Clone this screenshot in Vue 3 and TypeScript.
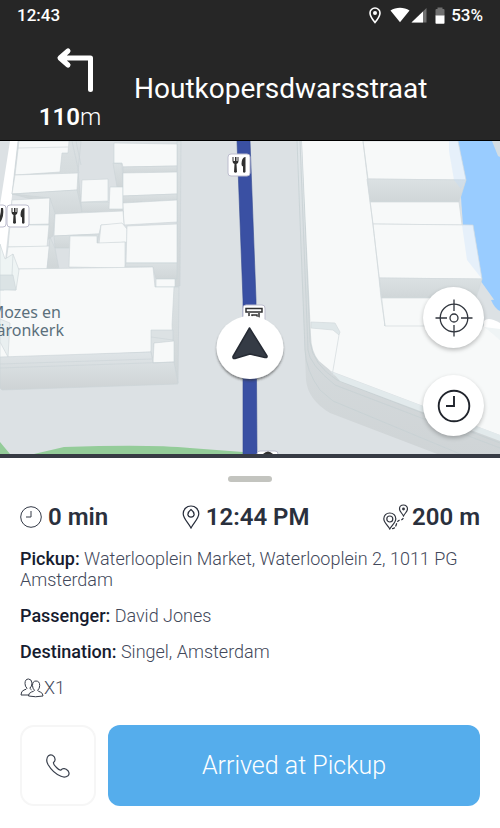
<script setup lang="ts">
import { ref } from 'vue'

interface Detail {
  label: string
  value: string
}

const nextTurn = { distance: 110, unit: 'm', street: 'Houtkopersdwarsstraat' }

const details: Detail[] = [
  { label: 'Pickup:', value: 'Waterlooplein Market, Waterlooplein 2, 1011 PG Amsterdam' },
  { label: 'Passenger:', value: 'David Jones' },
  { label: 'Destination:', value: 'Singel, Amsterdam' },
]

const passengers = ref(1)
</script>

<template>
  <main class="screen">
    <header class="top">
      <div class="status">
        <time>12:43</time>
        <div class="status-icons">
          <svg class="pin" width="12" height="17" viewBox="0 0 12 17">
            <path d="M6 1C3.2 1 1 3.2 1 6c0 3.500 5 9.500 5 9.500S11 9.500 11 6c0-2.800-2.200-5-5-5z" fill="none" stroke="#fff" stroke-width="1.600" />
            <circle cx="6" cy="6" r="2" fill="#fff" />
          </svg>
          <svg width="38" height="17" viewBox="0 0 38 17">
            <path d="M0.500 3.500C6 -0.200 14 -0.200 19.500 3.500L10 15.300z" fill="#fff" />
            <path d="M36.500 1v14.500H21.500z" fill="#707070" />
            <path d="M33 4.400v11.100H21.500z" fill="#fff" />
          </svg>
          <svg class="battery" width="10" height="17" viewBox="0 0 10 17">
            <path d="M0.500 3q0-1 1-1h1V.500h5V2h1q1 0 1 1v6h-9z" fill="#707070" />
            <path d="M.500 8.500h9V16q0 .800-.800.800H1.300Q.500 16.800.500 16z" fill="#fff" />
          </svg>
          <span>53%</span>
        </div>
      </div>
      <div class="turn">
        <div class="maneuver">
          <svg width="38" height="46" viewBox="0 0 38 46" fill="none" stroke="#fff" stroke-width="5" stroke-linecap="round" stroke-linejoin="round">
            <path d="M12 5L4 12L12 19M5 12H34.500V43.500" />
          </svg>
          <p class="distance"><strong>{{ nextTurn.distance }}</strong>{{ nextTurn.unit }}</p>
        </div>
        <h1>{{ nextTurn.street }}</h1>
      </div>
    </header>

    <section class="map" aria-label="Map">
      <svg class="map-canvas" viewBox="0 141 500 313">
        <defs>
          <linearGradient id="side" x1="0" y1="0" x2="0" y2="1">
            <stop offset="0" stop-color="#dbe1e3" />
            <stop offset="1" stop-color="#d0d6d8" />
          </linearGradient>
          <linearGradient id="wall" x1="0" y1="0" x2="0" y2="1">
            <stop offset="0" stop-color="#dfe5e8" />
            <stop offset="1" stop-color="#ced3d5" />
          </linearGradient>
          <filter id="soft" x="-20%" y="-20%" width="140%" height="150%">
            <feDropShadow dx="0" dy="2" stdDeviation="1" flood-color="#333" flood-opacity=".55" />
          </filter>
        </defs>
        <rect y="141" width="500" height="313" fill="#dce1e4" />

        <!-- alley and the western city block -->
        <path d="M10 141H18L11 205L4 270L0 255V205z" fill="#fff" />
        <g stroke="#cbd3d6" stroke-width=".6" stroke-linejoin="round">
          <path d="M68 141H81L78 172L82 212L54 205L12 194L18 141z" fill="url(#side)" />
          <path d="M72 141L79 173M76 141L81 165" fill="none" />
          <path d="M19 141H69L68 153H62L60 172L15 175z" fill="#f7f9f9" />
          <path d="M18 148L68 147" fill="none" />
          <path d="M15 175L78 173L77 190L12 194z" fill="#f7f9f9" />
          <path d="M12 194L77 190L82 212L54 218L50 198z" fill="url(#side)" />
          <path d="M12 200L50 198L49 224L10 225z" fill="#f7f9f9" />
          <path d="M50 198L55 213L53 236L47 240L49 224z" fill="url(#side)" />
          <path d="M10 225L49 225L47 247L8 247z" fill="#f7f9f9" />
          <path d="M8 247L50 246L47 269L5 269z" fill="#f7f9f9" />
          <path d="M50 237L55 248L59 269H47z" fill="url(#side)" />
          <path d="M81 202H108L124 209L123 213L82 212z" fill="url(#side)" />
          <path d="M82 180L108 179V201L81 202z" fill="#f7f9f9" />
          <path d="M113 163L122 164L123 188L117 187z" fill="url(#side)" />
          <path d="M110 187L123 187V209L109 209z" fill="#f7f9f9" />
          <path d="M177 141H181L180 286L174 287L177 240z" fill="url(#side)" />
          <path d="M114 143L177 144V166L123 167L122 163H114z" fill="#f7f9f9" />
          <path d="M123 167L177 166V172L123 174z" fill="url(#side)" />
          <path d="M123 173L177 172V194L123 196z" fill="#f7f9f9" />
          <path d="M123 196L177 194V200L123 203z" fill="url(#side)" />
          <path d="M123 203L177 200V222L124 225z" fill="#f7f9f9" />
          <path d="M55 214L123 211L124 225L101 225L99 234L54 236z" fill="#f7f9f9" />
          <path d="M54 236L99 234L97 244L70 248L55 248z" fill="url(#side)" />
          <path d="M101 225L122 223L127 229L127 242L99 244z" fill="#f7f9f9" />
          <path d="M70 236H97V243L125 242L125 268L69 267z" fill="#f7f9f9" />
          <path d="M127 226L177 224V263L126 263z" fill="#f7f9f9" />
          <path d="M126 263H177V279L156 279L153 267L125 267z" fill="url(#side)" />
          <path d="M156 279H175V287H156z" fill="#f7f9f9" />
          <path d="M19 269L153 267L155 287H175L173 340H154L151 352L0 359V290H4z" fill="#f7f9f9" />
          <path d="M174 287H179L178 383L174 362L172 325z" fill="url(#side)" />
          <path d="M151 330H173V342L154 343V363L151 352z" fill="#dce2e4" />
          <path d="M151 337L173 340" fill="none" />
          <path d="M154 343L174 341V363L153 363z" fill="#f7f9f9" />
          <path d="M0 357L151 352L153 363L174 362L178 384L2 390L0 388z" fill="url(#wall)" />
          <path d="M0 364L152 359M0 368L174 362" fill="none" />
          <path d="M0 244L5 259L13 254L19 270L16 290L0 289z" fill="#eef4f4" />
          <path d="M0 275L13 275L16 290H0z" fill="#dbe3e5" />
          <path d="M13 254L12 275" fill="none" />
          <path d="M0 319L10 323L8 357L0 342z" fill="#e9eff0" />
        </g>

        <!-- eastern block beside the canal -->
        <path d="M457 141H500V326L478 282L463 226z" fill="#99ccff" />
        <path d="M492 141H500V157L498 156z" fill="#d3dde3" />
        <path d="M480 280L500 308V345H470z" fill="#dce1e4" />
        <path d="M491 300Q495 309 500 311V299z" fill="#99ccff" />
        <path d="M296 141H304L316 350L333 375L500 438V478L330 413Q308 400 306 380z" fill="url(#wall)" />
        <g fill="none" stroke="#c7d0d3" stroke-width=".8">
          <path d="M297 141L305 350Q306 371 320 390L333 401L465 456" />
          <path d="M300 141L308 350Q309 364 335 385L500 448" />
          <path d="M302 141L310 342Q313 365 337 380L500 443" />
        </g>
        <path d="M302 141H363L384 318V326H484L500 340V435L331 371L319 361Q311 351 311 335z" fill="#f7f9f9" />
        <g stroke="#d2dadd" stroke-width=".7" stroke-linejoin="round">
          <path d="M363 141H458L466 180L368 179z" fill="#f7f9f9" />
          <path d="M367 179L466 180L459 202L370 202z" fill="url(#side)" />
          <path d="M370 202H459L462 225L373 224z" fill="#f7f9f9" />
          <path d="M373 224L473 225L482 279L379 278z" fill="#f7f9f9" />
          <path d="M379 278L482 279L476 298L381 298z" fill="url(#side)" />
          <path d="M381 298H476L484 326H385z" fill="#f7f9f9" />
          <path d="M363 141L385 326" fill="none" />
          <path d="M311 322L335 323L340 332L339 335L333 330L311 328z" fill="#dfe7e9" />
          <path d="M339 335L332 376" fill="none" />
        </g>
        <path d="M449 141H458L466 180L461 189L454 180L449 151zM462 225H473L482 279L467 260z" fill="#b9dcff" opacity=".28" />
        <path d="M484 321Q488 316 500 323V340L484 327z" fill="#fff" />
        <path d="M484 327L500 329V340z" fill="#eff4f5" />
        <path d="M332 372L500 435V441L340 381z" fill="#e2eaec" />

        <path d="M0 442L10 454H0zM34 454L64 447Q150 444 190 448L243 452V454z" fill="#94cc99" />

        <!-- route -->
        <path d="M237 141H250L256 300L257 454H243L243 300z" fill="#3a50a3" />
        <path d="M237 141L243 300V454M250 141L256 300L257 454" fill="none" stroke="#334890" stroke-width=".6" />

        <g class="place">
          <text x="61" y="318" text-anchor="end">Mozes en</text>
          <text x="64" y="336" text-anchor="end">Aäronkerk</text>
        </g>

        <g stroke="#bdbdce" fill="#fff">
          <rect x="-17" y="205" width="23" height="22" rx="3" />
          <rect x="7" y="205" width="22" height="22" rx="3" />
          <rect x="228" y="154" width="22" height="22" rx="3" />
          <rect x="243" y="305" width="22" height="22" rx="3" />
          <rect x="257" y="451" width="21" height="20" rx="3" />
        </g>
        <path d="M1 208H3Q4 214 2 219Q0 224-2 222L0 216Q1 212 1 208z" fill="#303030" />
        <g v-for="marker in [{ x: 7, y: 205 }, { x: 228, y: 154 }]" :key="marker.x" :transform="`translate(${marker.x} ${marker.y})`" fill="#303030">
          <path d="M4.500 3V7Q4.500 9.500 6.500 10L6 18Q7.500 19.500 9 18L8.500 10Q10.500 9.500 10.500 7V3H9.500V7H8.500V3H7V7H5.500V3z" />
          <path d="M17 3Q13.500 4 13.500 10Q13.500 12 15 12.500V18Q16 19.500 17.500 18V3z" />
        </g>
        <g fill="none" stroke="#303030" stroke-width="1.500">
          <path d="M246 308.500H262V312H246zM249 313V320M259 313V320M252 318V315H257V318" />
        </g>
        <path d="M263 454Q268 449 273 454" fill="#303030" />

        <!-- own position -->
        <ellipse cx="250" cy="347.500" rx="33.500" ry="31.500" fill="#fff" filter="url(#soft)" />
        <path d="M249.500 328L267 356Q267.500 358 265 357.500L250 354L235 358.500Q232.500 359 233 356.500z" fill="#353b45" stroke="#262b34" stroke-width="1.500" stroke-linejoin="round" />
      </svg>

      <div class="map-controls">
        <button type="button" aria-label="Center on my position">
          <svg width="38" height="38" viewBox="0 0 38 38" fill="none" stroke="#30353d" stroke-width="1.300">
            <circle cx="19" cy="19" r="13.800" />
            <circle cx="19" cy="19" r="4" />
            <path d="M19 .500V12M19 26V37.500M.500 19H12M26 19H37.500" />
          </svg>
        </button>
        <button type="button" aria-label="Waiting time">
          <svg width="34" height="34" viewBox="0 0 34 34" fill="none" stroke="#20242c" stroke-width="1.900">
            <circle cx="17" cy="17" r="15.300" />
            <path d="M17 7V17H9" />
          </svg>
        </button>
      </div>
    </section>

    <section class="sheet">
      <div class="handle"></div>
      <div class="stats">
        <p class="stat">
          <svg width="22" height="22" viewBox="0 0 22 22" fill="none" stroke="#343a47">
            <circle cx="11" cy="11" r="10.300" />
            <path d="M11 5V11H6" />
          </svg>
          0 min
        </p>
        <p class="stat">
          <svg width="18" height="24" viewBox="0 0 18 24" fill="none" stroke="#252b39" stroke-width="1.200">
            <path d="M9 1C4.500 1 1.200 4.500 1.200 8.800C1.200 13.500 6.500 18 9 23C11.500 18 16.800 13.500 16.800 8.800C16.800 4.500 13.500 1 9 1z" />
            <path d="M9 4.500C7 6 5.800 7.800 5.800 9.700A3.300 3.300 0 0 0 12.200 9.700C12.200 7.800 11 6 9 4.500z" />
          </svg>
          12:44 PM
        </p>
        <p class="stat trip">
          <svg width="25" height="26" viewBox="0 0 25 26" fill="none" stroke="#30343e" stroke-width="1.200">
            <path d="M6.800 9C3.300 9 .800 11.500.800 14.700C.800 18.500 4.500 21 6.800 25C9.100 21 12.800 18.500 12.800 14.700C12.800 11.500 10.300 9 6.800 9z" />
            <circle cx="6.800" cy="15" r="3" />
            <path d="M20.500 1C18.200 1 16.500 2.700 16.500 4.900C16.500 7.500 19 9 20.500 12C22 9 24.500 7.500 24.500 4.900C24.500 2.700 22.800 1 20.500 1z" />
            <circle cx="20.500" cy="5" r=".8" fill="#30343e" />
            <path d="M9 24.500Q12 25 13.500 20Q14.500 16.500 17 16Q20.500 16 20.500 12.500" stroke-dasharray="3 1.500" />
          </svg>
          200 m
        </p>
      </div>

      <div class="details">
        <p v-for="item in details" :key="item.label"><strong>{{ item.label }}</strong> {{ item.value }}</p>
        <p class="party">
          <svg width="24" height="20" viewBox="0 0 24 20" fill="none" stroke="#353b47" stroke-width="1">
            <path d="M12 5Q11.500 1 8.500 1Q5 1 5 5.500Q5 8.500 7 10.300Q6.500 11.500 4 12Q1 13 1 17H9" />
            <path d="M12 5Q12 8.500 9.800 10.300L11.500 11.800M16 3Q12.500 3 12.500 7.500Q12.500 10.500 14.500 12.300Q14 13.500 11.500 14Q8.500 15 8.500 18Q15.500 19.500 23 18Q23 15 20.300 14Q18 13.500 17.700 12.300Q19.700 10.500 19.700 7.500Q19.700 3 16 3z" />
          </svg>
          <span>X{{ passengers }}</span>
        </p>
      </div>

      <div class="actions">
        <button class="call" type="button" aria-label="Call passenger">
          <svg width="24" height="24" viewBox="0 0 24 24" fill="none" stroke="#383f4c" stroke-width="1.200" stroke-linejoin="round">
            <path d="M2.500 1.700Q4.500 .200 6.500 1.200Q9.500 3 9 6Q9 7.200 7.500 8.500Q7 10.500 10.500 13.500Q13.500 16.800 15 16Q16.500 14.200 18 14.700Q20 14.500 22.200 17Q24 20 22 21.700Q19 24 15 22.300Q7 19 2 10.500Q-.800 5 2.500 1.700z" />
          </svg>
        </button>
        <button class="arrived" type="button">Arrived at Pickup</button>
      </div>
    </section>
  </main>
</template>

<style>
body {
  background: #fff;
}
</style>

<style scoped>
.screen {
  font-family: Roboto, "Liberation Sans", sans-serif;
  color: #20263a;
}

p,
h1 {
  margin: 0;
}

svg {
  display: block;
}

button {
  display: flex;
  align-items: center;
  justify-content: center;
  padding: 0;
  border: 0;
  font: inherit;
  cursor: pointer;
}

.top {
  padding-bottom: 8px;
  border-bottom: 1px solid #000;
  background: #262626;
  color: #fff;
}

.status {
  display: flex;
  align-items: center;
  justify-content: space-between;
  height: 30px;
  padding: 0 17px;
  font-size: 17px;
  font-weight: 500;
}

.status-icons {
  display: flex;
  align-items: center;
}

.pin {
  margin-right: 9px;
}

.battery {
  margin: 0 6px 0 7px;
}

.turn {
  display: flex;
  align-items: center;
  padding: 16px 16px 0 36px;
}

.maneuver {
  display: flex;
  flex-direction: column;
  align-items: center;
  width: 68px;
  margin-right: 30px;
}

.maneuver svg {
  margin-left: 10px;
}

.distance {
  margin-top: 10px;
  font-size: 24px;
  font-weight: 300;
  line-height: 30px;
}

.distance strong {
  font-weight: 600;
}

h1 {
  font-size: 28px;
  font-weight: 400;
  line-height: 34px;
}

.map {
  position: relative;
  border-bottom: 4px solid #373b44;
  overflow: hidden;
}

.map-canvas {
  width: 100%;
  height: auto;
}

.place {
  fill: #5b707c;
  font-family: "Noto Sans", sans-serif;
  font-size: 16px;
  font-weight: 400;
}

.map-controls {
  position: absolute;
  right: 16px;
  bottom: 18px;
  display: grid;
  gap: 27px;
}

.map-controls button {
  width: 61px;
  height: 61px;
  border-radius: 50%;
  background: #fff;
  box-shadow: 0 2px 4px rgb(0 0 0 / 25%);
}

.sheet {
  padding: 18px 20px 22px;
  background: #fff;
}

.handle {
  width: 44px;
  height: 6px;
  margin: 0 auto;
  border-radius: 3px;
  background: #c3c4bf;
}

.stats {
  display: flex;
  justify-content: space-between;
  margin-top: 20px;
}

.stat {
  display: flex;
  align-items: center;
  gap: 6px;
  font-size: 24px;
  font-weight: 600;
  line-height: 30px;
  color: #2a303d;
}

.trip {
  gap: 4px;
}

.details {
  display: grid;
  gap: 15px;
  margin-top: 16px;
  color: #42485a;
  font-size: 18px;
  font-weight: 300;
  line-height: 21px;
}

.details strong {
  color: #161c2f;
  font-weight: 500;
}

.party {
  display: flex;
  align-items: center;
}

.actions {
  display: flex;
  gap: 12px;
  margin-top: 27px;
}

.call {
  width: 76px;
  height: 81px;
  border: 2px solid #f6f6f6;
  border-radius: 14px;
  background: #fff;
}

.arrived {
  flex: 1;
  border-radius: 12px;
  background: #55adec;
  color: #fff;
  font-size: 25px;
  font-weight: 300;
}
</style>
